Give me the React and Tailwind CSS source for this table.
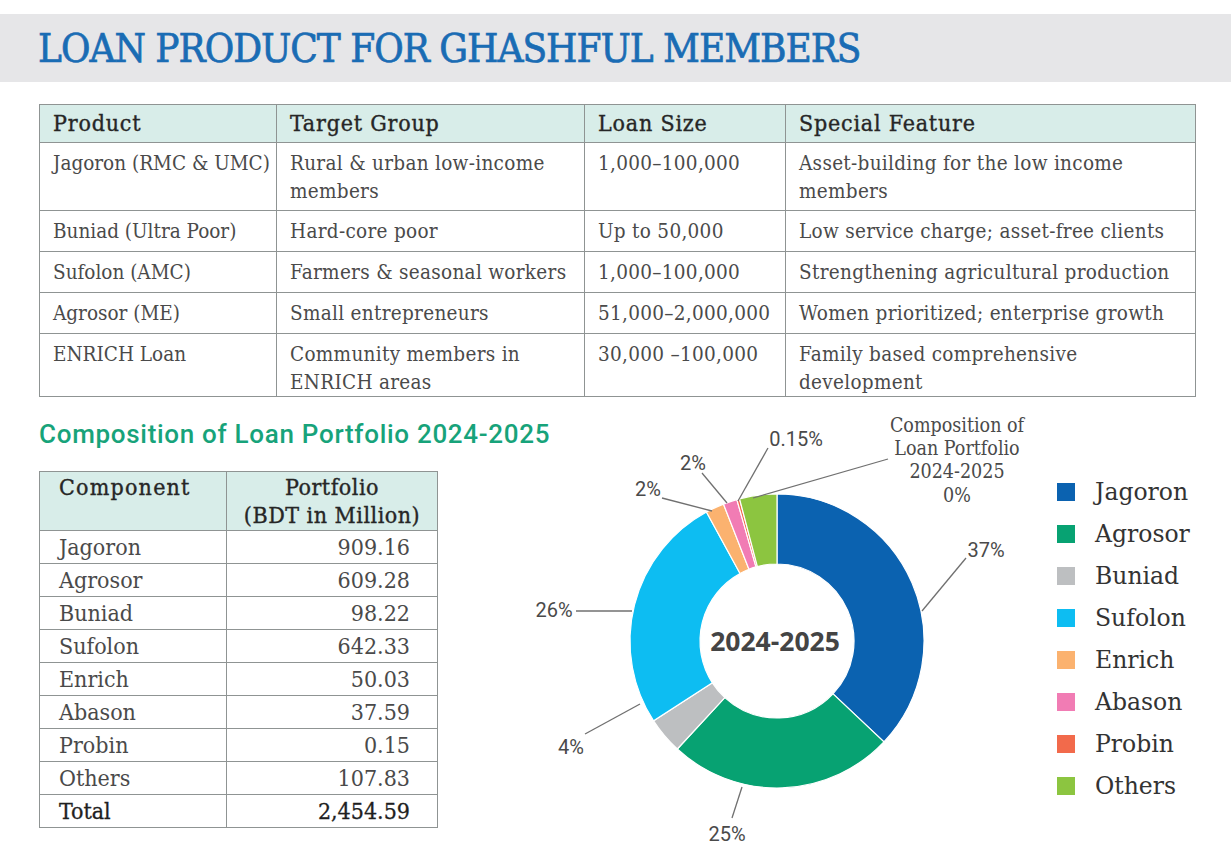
import React from "react";

const slab = "font-['DejaVu_Serif_Condensed','DejaVu_Serif',serif]";

const products = [
  ["Jagoron (RMC & UMC)", "Rural & urban low-income members", "1,000–100,000", "Asset-building for the low income members"],
  ["Buniad (Ultra Poor)", "Hard-core poor", "Up to 50,000", "Low service charge; asset-free clients"],
  ["Sufolon (AMC)", "Farmers & seasonal workers", "1,000–100,000", "Strengthening agricultural production"],
  ["Agrosor (ME)", "Small entrepreneurs", "51,000–2,000,000", "Women prioritized; enterprise growth"],
  ["ENRICH Loan", "Community members in ENRICH areas", "30,000 –100,000", "Family based comprehensive development"],
];

const portfolio = [
  { name: "Jagoron", value: 909.16, color: "#0b62b0" },
  { name: "Agrosor", value: 609.28, color: "#07a272" },
  { name: "Buniad", value: 98.22, color: "#bdbfc1" },
  { name: "Sufolon", value: 642.33, color: "#0dbdf2" },
  { name: "Enrich", value: 50.03, color: "#fbb26f" },
  { name: "Abason", value: 37.59, color: "#f17cb4" },
  { name: "Probin", value: 0.15, color: "#f26a4b" },
  { name: "Others", value: 107.83, color: "#8cc540" },
];

const total = portfolio.reduce((s, p) => s + p.value, 0);

const cx = 257;
const cy = 235;
const R = 147;
const r = 77;

const pt = (rad, a) => [cx + rad * Math.sin(a), cy - rad * Math.cos(a)];

const slicePath = (a0, a1) => {
  const large = a1 - a0 > Math.PI ? 1 : 0;
  const [x0, y0] = pt(R, a0);
  const [x1, y1] = pt(R, a1);
  const [x2, y2] = pt(r, a1);
  const [x3, y3] = pt(r, a0);
  return `M${x0} ${y0} A${R} ${R} 0 ${large} 1 ${x1} ${y1} L${x2} ${y2} A${r} ${r} 0 ${large} 0 ${x3} ${y3} Z`;
};

const slices = (() => {
  let acc = 0;
  return portfolio.map((p) => {
    const frac = Math.max(p.value / total, 0.003);
    const a0 = acc * 2 * Math.PI;
    acc += frac;
    const a1 = Math.min(acc, 1) * 2 * Math.PI;
    return { ...p, d: slicePath(a0, a1) };
  });
})();

// leader lines, in chart coords (chart svg starts at 520,405)
const leaders = [
  { text: "37%", x: 466, y: 151, line: [402, 205, 446, 152] },
  { text: "25%", x: 207, y: 435, line: [222, 381, 212, 412] },
  { text: "4%", x: 51, y: 348, line: [120, 298, 65, 328] },
  { text: "26%", x: 34, y: 211, line: [56, 205, 112, 205] },
  { text: "2%", x: 128, y: 90, line: [142, 92, 192, 105] },
  { text: "2%", x: 173, y: 64, line: [182, 67, 207, 97] },
  { text: "0.15%", x: 276, y: 40, line: [248, 42, 218, 95] },
];

const Donut = () => (
  <svg width="540" height="445" viewBox="0 0 540 445" className="block">
    {slices.map((s) => (
      <path key={s.name} d={s.d} fill={s.color} stroke="#ffffff" strokeWidth="1.2" />
    ))}
    {leaders.map((l, i) => (
      <g key={i}>
        <line x1={l.line[0]} y1={l.line[1]} x2={l.line[2]} y2={l.line[3]} stroke="#707070" strokeWidth="1.3" />
        <text x={l.x} y={l.y} textAnchor="middle" fontFamily="Roboto, 'Liberation Sans', sans-serif" fontSize="20" fill="#4a4a4a">
          {l.text}
        </text>
      </g>
    ))}
    <line x1="368" y1="53" x2="233" y2="92" stroke="#707070" strokeWidth="1.3" />
    <text textAnchor="middle" fontFamily="'DejaVu Serif Condensed','DejaVu Serif',serif" fontSize="19.5" fill="#4a4a4a">
      <tspan x="437" y="26">Composition of</tspan>
      <tspan x="437" y="49">Loan Portfolio</tspan>
      <tspan x="437" y="72">2024-2025</tspan>
      <tspan x="437" y="96">0%</tspan>
    </text>
    <text x={cx - 2} y={cy + 10} textAnchor="middle" fontFamily="'Open Sans', Roboto, sans-serif" fontWeight="700" fontSize="26.5" fill="#444444">
      2024-2025
    </text>
  </svg>
);

const rowPad = (ri) => {
  if (ri === 0) return "pb-[5px]";
  if (ri === products.length - 1) return "pb-0";
  return "pb-[6px]";
};

const App = () => {
  return (
    <div className={`w-[1231px] h-[860px] bg-white overflow-hidden ${slab}`}>
      <div className="mt-[14px] h-[68px] bg-[#e6e6e8] flex items-center pl-[38px]">
        <h1 className="text-[40px] leading-none text-[#1a6cb4] tracking-[-1px] [-webkit-text-stroke:0.7px_#1a6cb4]">
          LOAN PRODUCT FOR GHASHFUL MEMBERS
        </h1>
      </div>

      <table className="mt-[22px] ml-[39px] w-[1156px] border-collapse table-fixed">
        <colgroup>
          <col className="w-[237px]" />
          <col className="w-[308px]" />
          <col className="w-[201px]" />
          <col className="w-[410px]" />
        </colgroup>
        <thead>
          <tr className="bg-[#d8ede9]">
            {["Product", "Target Group", "Loan Size", "Special Feature"].map((h) => (
              <th key={h} className="border border-[#8f9493] text-left font-normal text-[23px] leading-[29px] py-[4px] px-[13px] text-[#262626] tracking-[0.8px] [-webkit-text-stroke:0.35px_#262626]">
                {h}
              </th>
            ))}
          </tr>
        </thead>
        <tbody>
          {products.map((row, ri) => (
            <tr key={row[0]}>
              {row.map((c, i) => (
                <td
                  key={i}
                  className={`border border-[#8f9493] align-top text-[20.5px] leading-[28px] pt-[6px] pl-[13px] text-[#4a4a4a] ${i === 0 ? "pr-0 whitespace-nowrap tracking-normal" : "pr-[4px] tracking-[0.3px]"} ${rowPad(ri)}`}
                >
                  {c}
                </td>
              ))}
            </tr>
          ))}
        </tbody>
      </table>

      <div className="flex mt-[4px]">
        <div className="ml-[39px] w-[398px] shrink-0">
          <h2 className="mt-[19px] whitespace-nowrap font-['Roboto',sans-serif] text-[26px] leading-[28px] text-[#17a37a] font-medium tracking-[0.7px]">
            Composition of Loan Portfolio 2024-2025
          </h2>
          <table className="mt-[23px] w-[398px] border-collapse table-fixed">
            <colgroup>
              <col className="w-[187px]" />
              <col className="w-[211px]" />
            </colgroup>
            <thead>
              <tr className="bg-[#d8ede9]">
                <th className="border border-[#8f9493] text-left align-top font-normal text-[23px] leading-[28px] py-[1px] pl-[19px] text-[#262626] tracking-[1.2px] [-webkit-text-stroke:0.35px_#262626]">
                  Component
                </th>
                <th className="border border-[#8f9493] text-center align-top font-normal text-[23px] leading-[28px] py-[1px] text-[#262626] tracking-[0.5px] [-webkit-text-stroke:0.35px_#262626]">
                  Portfolio
                  <br />
                  (BDT in Million)
                </th>
              </tr>
            </thead>
            <tbody>
              {portfolio.map((p) => (
                <tr key={p.name}>
                  <td className="border border-[#8f9493] text-[23px] leading-[26px] py-[3px] pl-[19px] text-[#4a4a4a]">{p.name}</td>
                  <td className="border border-[#8f9493] text-right text-[23px] leading-[26px] py-[3px] pr-[27px] text-[#4a4a4a]">
                    {p.value.toFixed(2)}
                  </td>
                </tr>
              ))}
              <tr>
                <td className="border border-[#8f9493] text-[23px] leading-[26px] py-[3px] pl-[19px] text-[#1f1f1f] [-webkit-text-stroke:0.3px_#1f1f1f]">Total</td>
                <td className="border border-[#8f9493] text-right text-[23px] leading-[26px] py-[3px] pr-[27px] text-[#1f1f1f] [-webkit-text-stroke:0.3px_#1f1f1f]">
                  2,454.59
                </td>
              </tr>
            </tbody>
          </table>
        </div>

        <div className="ml-[83px] mt-[5px]">
          <Donut />
        </div>

        <ul className="-ml-[3px] mt-[79px] flex flex-col gap-[18px] font-['DejaVu_Serif',serif]">
          {portfolio.map((p) => (
            <li key={p.name} className="flex items-center gap-[20px] h-[24px]">
              <span className="w-[18px] h-[18px] shrink-0" style={{ backgroundColor: p.color }} />
              <span className="text-[23.5px] leading-[24px] text-[#333]">{p.name}</span>
            </li>
          ))}
        </ul>
      </div>
    </div>
  );
};

export default App;
